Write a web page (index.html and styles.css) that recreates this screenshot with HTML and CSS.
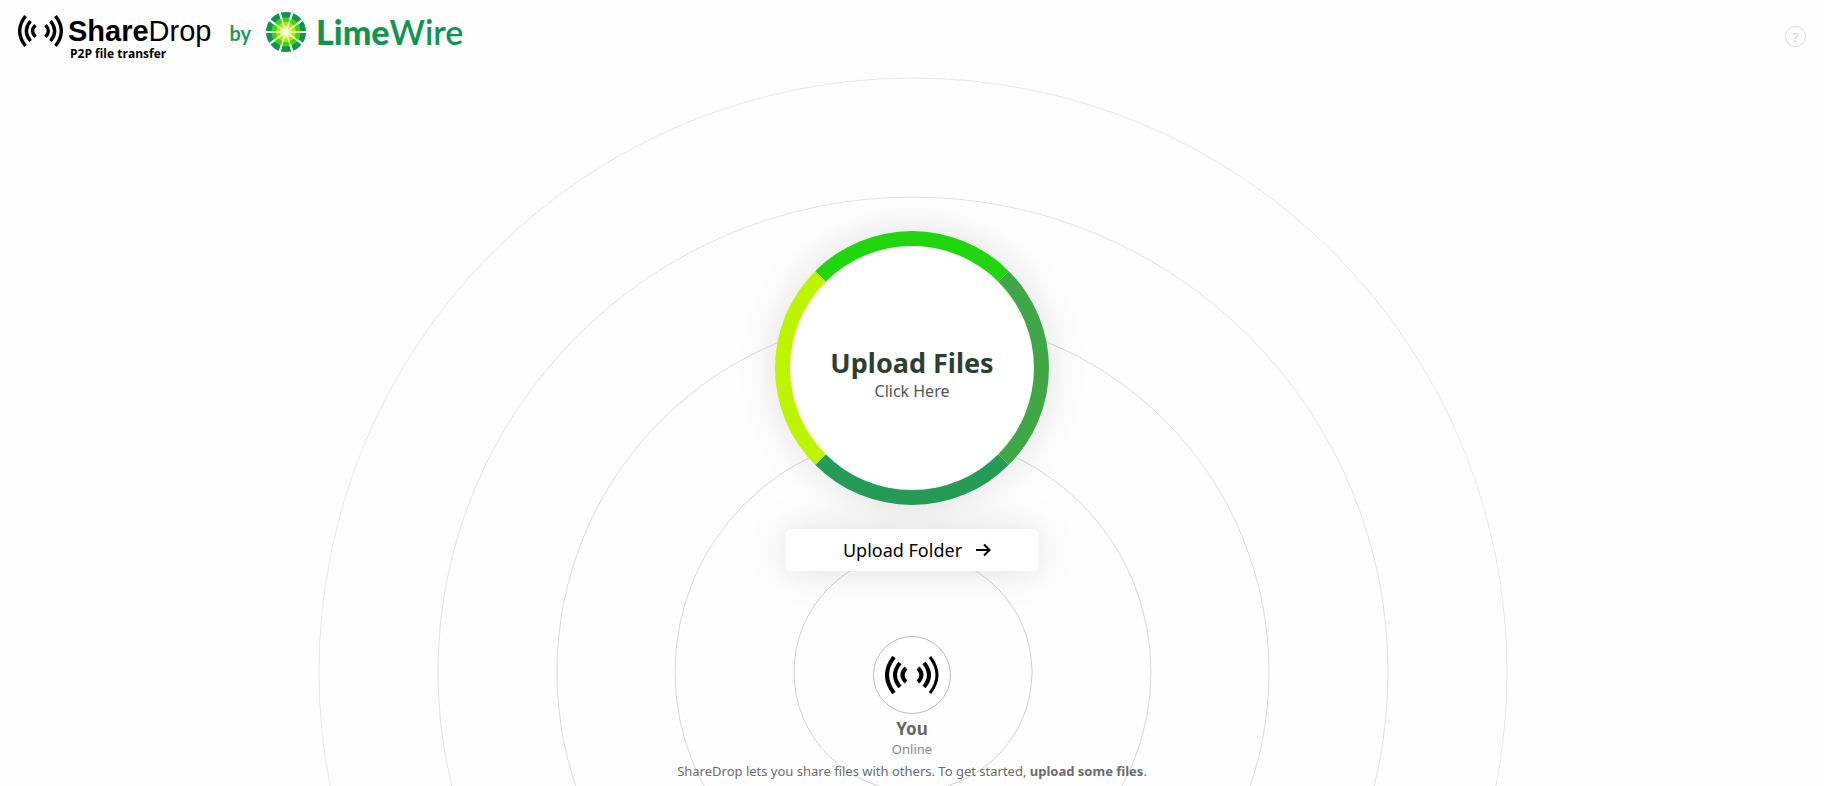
FILE: index.html
```html
<!DOCTYPE html>
<html lang="en">
<head>
<meta charset="utf-8">
<meta name="viewport" content="width=device-width, initial-scale=1">
<title>ShareDrop by LimeWire</title>
<link rel="stylesheet" href="styles.css">
</head>
<body>
<div class="backdrop" aria-hidden="true">
  <svg class="rings" viewBox="0 0 1190 1190">
    <circle cx="595" cy="595" r="119" stroke="#d2d2d2"/>
    <circle cx="595" cy="595" r="238" stroke="#d8d8d8"/>
    <circle cx="595" cy="595" r="356" stroke="#dcdcdc"/>
    <circle cx="595" cy="595" r="475" stroke="#e2e2e2"/>
    <circle cx="595" cy="595" r="594" stroke="#e7e7e7"/>
  </svg>
</div>

<header class="header">
  <a class="brand" href="#">
    <svg class="brand-waves" viewBox="0 0 54 38" aria-hidden="true">
      <g class="waves">
        <path d="M9 1Q-5 19 9 37M15 7Q5 19 15 31M21 12Q14 19 21 26"/>
        <path d="M45 1Q59 19 45 37M39 7Q49 19 39 31M33 12Q40 19 33 26"/>
      </g>
    </svg>
    <span class="brand-text">
      <span class="brand-name"><b>Share</b>Drop</span>
      <span class="brand-tag">P2P file transfer</span>
    </span>
  </a>
  <span class="by">by</span>
  <a class="limewire" href="#">
    <svg class="lime" viewBox="-21 -21 42 42" aria-hidden="true">
      <circle r="17" fill="none" stroke="#0f9550" stroke-width="6"/>
      <circle r="12" fill="none" stroke="#3fd60d" stroke-width="5"/>
      <circle r="8" fill="none" stroke="#a8ea0c" stroke-width="4"/>
      <circle r="6" fill="#e2ee3a"/>
      <circle r="3" fill="#fff"/>
      <path d="M-6.800-20.900 6.800 20.900M6.800-20.900-6.800 20.900M-17.800-12.900 17.800 12.900M17.800-12.900-17.800 12.900M-22 0H22" stroke="#f4fbe4" stroke-width="1.400"/>
      <path d="M-6.200-19-4.600-14M6.200-19 4.600-14M-6.200 19-4.600 14M6.200 19 4.600 14M-16.200-11.800-12-8.700M16.200-11.800 12-8.700M-16.200 11.800-12 8.700M16.200 11.800 12 8.700M-20 0H-15M20 0H15" stroke="#fff" stroke-width="2.200" stroke-linecap="square"/>
    </svg>
    <span class="lime-name"><b>Lime</b>Wire</span>
  </a>
  <button class="help" type="button" aria-label="Help">?</button>
</header>

<main class="main">
  <button class="upload" type="button">
    <span class="upload-title">Upload Files</span>
    <span class="upload-hint">Click Here</span>
  </button>
  <button class="folder" type="button">
    <span>Upload Folder</span>
    <svg class="arrow" viewBox="0 0 16 16" aria-hidden="true"><path d="M1 8H14.500M9 2.500 14.500 8 9 13.500"/></svg>
  </button>
  <section class="peer">
    <span class="avatar">
      <svg class="avatar-waves" viewBox="0 0 54 38" aria-hidden="true">
        <g class="waves">
          <path d="M9 1Q-5 19 9 37M15 7Q5 19 15 31M21 12Q14 19 21 26"/>
          <path d="M39 7Q49 19 39 31M33 12Q40 19 33 26"/>
          <path class="thin" d="M45 1Q59 19 45 37"/>
        </g>
      </svg>
    </span>
    <strong class="peer-name">You</strong>
    <span class="peer-status">Online</span>
  </section>
</main>

<footer class="footer">ShareDrop lets you share files with others. To get started, <b>upload some files</b>.</footer>
</body>
</html>
```
FILE: styles.css
```css
* {
  box-sizing: border-box;
}

body {
  position: relative;
  display: flex;
  flex-direction: column;
  min-height: 100vh;
  margin: 0;
  background: #fefefe;
  color: #000;
  font-family: "Noto Sans", "Open Sans", sans-serif;
}

a {
  color: inherit;
  text-decoration: none;
}

button {
  padding: 0;
  font-family: inherit;
  cursor: pointer;
}

.backdrop {
  position: absolute;
  z-index: -1;
  inset: 0;
  overflow: hidden;
}

.rings {
  position: absolute;
  bottom: -481px;
  left: 50%;
  width: 1190px;
  height: 1190px;
  margin-left: -594px;
  fill: none;
}

.header {
  display: flex;
  align-items: flex-start;
  padding: 10px 18px 0;
}

.brand {
  display: flex;
  gap: 5px;
}

.brand-waves {
  width: 45px;
  height: 42px;
}

.waves {
  fill: none;
  stroke: #000;
  stroke-width: 4;
}

.thin {
  stroke-width: 3;
}

.brand-text {
  display: flex;
  flex-direction: column;
}

.brand-name {
  padding-top: 5px;
  font: 29px/32px "Liberation Sans", Arial, sans-serif;
}

.brand-tag {
  padding-left: 2px;
  font-family: "Open Sans", sans-serif;
  font-size: 12px;
  font-weight: 700;
  line-height: 14px;
}

.by {
  margin-left: 18px;
  color: #1f9a5a;
  font: 700 20px/46px Lato, sans-serif;
}

.limewire {
  display: flex;
  align-items: center;
  gap: 9px;
  margin-left: 14px;
}

.lime {
  width: 42px;
  height: 42px;
}

.lime-name {
  color: #0f9550;
  font: 600 34px/44px Lato, sans-serif;
}

.lime-name b {
  font-weight: 900;
}

.help {
  width: 21px;
  height: 21px;
  margin: 16px 0 0 auto;
  border: 1px solid #d8d8d8;
  border-radius: 50%;
  background: none;
  color: #d4d4d4;
  font-size: 13px;
  line-height: 18px;
}

.main {
  display: flex;
  flex: 1;
  flex-direction: column;
  align-items: center;
  padding-top: 170px;
}

.upload {
  display: flex;
  flex-direction: column;
  align-items: center;
  justify-content: center;
  width: 274px;
  height: 274px;
  padding-top: 14px;
  border: 15px solid;
  border-color: #1fd60f #40a747 #269b57 #bdf400;
  border-radius: 50%;
  background: #fff;
  box-shadow: 0 0 40px rgba(0, 0, 0, 0.12);
}

.upload-title {
  color: #2f3e33;
  font-size: 27px;
  font-weight: 700;
  line-height: 32px;
}

.upload-hint {
  color: #555;
  font-size: 16px;
  line-height: 24px;
}

.folder {
  display: flex;
  align-items: center;
  justify-content: center;
  gap: 13px;
  width: 254px;
  height: 42px;
  margin-top: 24px;
  padding-left: 10px;
  border: 0;
  border-radius: 6px;
  background: #fff;
  box-shadow: 0 0 40px rgba(0, 0, 0, 0.12);
  color: #000;
  font-size: 18px;
}

.arrow {
  width: 16px;
  height: 16px;
  fill: none;
  stroke: #000;
  stroke-width: 2;
}

.peer {
  display: flex;
  flex-direction: column;
  align-items: center;
  margin-top: auto;
}

.avatar {
  display: flex;
  align-items: center;
  justify-content: center;
  width: 78px;
  height: 78px;
  border: 1px solid #bbb;
  border-radius: 50%;
  background: #fff;
}

.avatar-waves {
  width: 54px;
  height: 38px;
}

.peer-name {
  margin-top: 4px;
  color: #666;
  font-size: 17px;
  line-height: 22px;
}

.peer-status {
  color: #888;
  font-size: 13px;
  line-height: 18px;
}

.footer {
  padding: 3px 16px 5px;
  color: #6c6c6c;
  font-size: 13px;
  line-height: 20px;
  text-align: center;
}
```
